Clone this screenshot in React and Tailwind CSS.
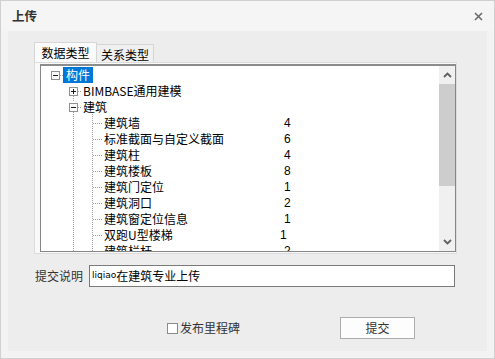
import React from "react";

const FONT = { fontFamily: '"Noto Sans CJK SC", "Liberation Sans", sans-serif' };

function Dots({ x, y1, y2 }) {
  return <line x1={x + 0.5} y1={y1} x2={x + 0.5} y2={y2} stroke="#a0a0a0" strokeWidth="1" strokeDasharray="1 1" shapeRendering="crispEdges" />;
}
function HDots({ y, x1, x2 }) {
  return <line x1={x1} y1={y + 0.5} x2={x2} y2={y + 0.5} stroke="#a0a0a0" strokeWidth="1" strokeDasharray="1 1" shapeRendering="crispEdges" />;
}
function Box({ cx, cy, plus }) {
  return (
    <g shapeRendering="crispEdges">
      <rect x={cx - 4 + 0.5} y={cy - 4 + 0.5} width="8" height="8" fill="#fbfbfb" stroke="#919191" />
      <rect x={cx - 2} y={cy} width="5" height="1" fill="#1a1a1a" />
      {plus && <rect x={cx} y={cy - 2} width="1" height="5" fill="#1a1a1a" />}
    </g>
  );
}

const items = [
  ["建筑墙", "4"],
  ["标准截面与自定义截面", "6"],
  ["建筑柱", "4"],
  ["建筑楼板", "8"],
  ["建筑门定位", "1"],
  ["建筑洞口", "2"],
  ["建筑窗定位信息", "1"],
  ["双跑U型楼梯", "1", true],
  ["建筑栏杆", "2"],
];

export default function App() {
  const rowCenters = [];
  for (let i = 3; i < 12; i++) rowCenters.push(10 + 16 * i);
  return (
    <div className="w-[495px] h-[359px] border border-[#d0d0d0] bg-[#f3f3f3] flex flex-col text-[12px] text-[#222]" style={FONT}>
      <div className="h-[30px] bg-[#f5f5f5] flex items-center justify-between pl-[11px] pr-[10px] shrink-0">
        <span className="text-[12.5px] font-bold text-[#333] leading-none pt-[1px]">上传</span>
        <svg width="9" height="9" viewBox="0 0 9 9" className="mr-[1px]">
          <path d="M1 1L8 8M8 1L1 8" stroke="#6a6a6a" strokeWidth="1.6" />
        </svg>
      </div>
      <div className="flex-1 px-[7px] pb-[7px]">
        <div className="h-full bg-[#ededed] pl-[26px] pt-[11px]">
          {/* tabs */}
          <div className="flex items-end h-[20px]">
            <div className="w-[63px] h-[20px] border border-b-0 border-[#d6d6d6] bg-[#fbfbfb] flex items-center justify-center leading-none text-black relative z-10">
              数据类型
            </div>
            <div className="w-[57px] h-[18px] border border-l-0 border-b-0 border-[#d6d6d6] bg-[#f0f0f0] flex items-center justify-center leading-none text-black pt-[2px]">
              关系类型
            </div>
          </div>
          {/* tab page */}
          <div className="w-[423px] h-[192px] border border-[#dcdcdc] bg-[#f9f9f9] pl-[5px] pt-[1px]">
            <div className="relative w-[416px] h-[188px] border border-[#868686] border-t-2 border-t-[#8c8c8c] bg-white overflow-hidden">
              <svg className="absolute left-0 top-[-1px]" width="400" height="190">
                <Box cx={14} cy={10} />
                <HDots y={10} x1={19} x2={22} />
                <Box cx={32} cy={26} plus />
                <HDots y={26} x1={37} x2={41} />
                <Box cx={32} cy={42} />
                <HDots y={42} x1={37} x2={41} />
                <Dots x={32} y1={31} y2={37} />
                <Dots x={32} y1={47} y2={190} />
                <Dots x={51} y1={47} y2={190} />
                {rowCenters.map((c) => (
                  <HDots key={c} y={c} x1={52} x2={61} />
                ))}
              </svg>
              <div className="relative pt-[1px] leading-[16px]">
                <div className="h-[16px] pl-[22px] flex">
                  <span className="bg-[#0078d7] text-white px-[3px] h-[16px] leading-[16px]">构件</span>
                </div>
                <div className="h-[16px] pl-[42px] text-black">BIMBASE通用建模</div>
                <div className="h-[16px] pl-[42px] text-black">建筑</div>
                {items.map(([t, n, s]) => (
                  <div key={t} className="h-[16px] pl-[63px] flex text-black">
                    <span className={s ? "w-[176px]" : "w-[180px]"}>{t}</span>
                    <span style={{ fontFamily: '"Liberation Sans", sans-serif' }} className="text-[12px]">{n}</span>
                  </div>
                ))}
              </div>
              {/* scrollbar */}
              <div className="absolute right-0 top-0 bottom-0 w-[16px] bg-[#f0f0f0] flex flex-col">
                <div className="h-[18px] flex items-center justify-center">
                  <svg width="9" height="6" viewBox="0 0 9 6">
                    <path d="M1 5L4.5 1.5L8 5" fill="none" stroke="#606060" strokeWidth="1.8" />
                  </svg>
                </div>
                <div className="h-[102px] bg-[#cdcdcd]" />
                <div className="flex-1" />
                <div className="h-[18px] flex items-center justify-center">
                  <svg width="9" height="6" viewBox="0 0 9 6">
                    <path d="M1 1L4.5 4.5L8 1" fill="none" stroke="#606060" strokeWidth="1.8" />
                  </svg>
                </div>
              </div>
            </div>
          </div>
          {/* description */}
          <div className="mt-[11px] flex items-center h-[22px]">
            <span className="ml-[1px] w-[54px] text-[#333]">提交说明</span>
            <div className="w-[366px] h-[22px] border border-[#7a7a7a] bg-white flex items-center pl-[2px] text-black">
              <span style={{ fontFamily: 'Tahoma, "DejaVu Sans", sans-serif' }} className="text-[9px]">liqiao</span>
              <span>在建筑专业上传</span>
            </div>
          </div>
          <div className="mt-[30px] flex items-center h-[22px]">
            <div className="ml-[133px] flex items-center">
              <span className="w-[11px] h-[11px] border border-[#8a8a8a] bg-white" />
              <span className="ml-[2px] text-[#333]">发布里程碑</span>
            </div>
            <div className="ml-[100px] w-[75px] h-[22px] border border-[#adadad] bg-[#fdfdfd] flex items-center justify-center text-[#333]">
              提交
            </div>
          </div>
        </div>
      </div>
    </div>
  );
}
